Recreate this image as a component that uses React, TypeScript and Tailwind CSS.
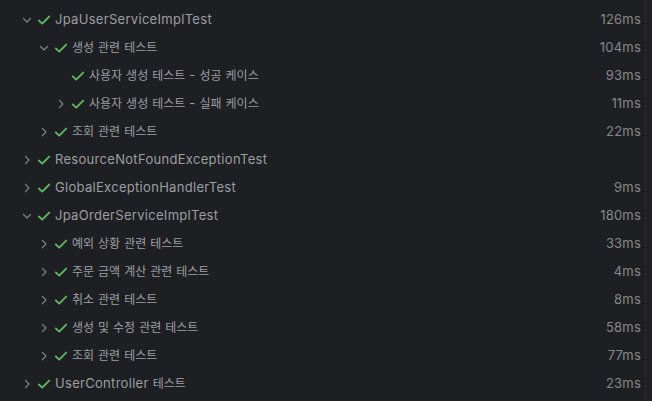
import React from "react";

type Row = {
  level: number;
  name: string;
  time?: string;
  open?: boolean;
  leaf?: boolean;
};

const rows: Row[] = [
  { level: 0, name: "JpaUserServiceImplTest", time: "126ms", open: true },
  { level: 1, name: "생성 관련 테스트", time: "104ms", open: true },
  { level: 2, name: "사용자 생성 테스트 - 성공 케이스", time: "93ms", leaf: true },
  { level: 2, name: "사용자 생성 테스트 - 실패 케이스", time: "11ms" },
  { level: 1, name: "조회 관련 테스트", time: "22ms" },
  { level: 0, name: "ResourceNotFoundExceptionTest" },
  { level: 0, name: "GlobalExceptionHandlerTest", time: "9ms" },
  { level: 0, name: "JpaOrderServiceImplTest", time: "180ms", open: true },
  { level: 1, name: "예외 상황 관련 테스트", time: "33ms" },
  { level: 1, name: "주문 금액 계산 관련 테스트", time: "4ms" },
  { level: 1, name: "취소 관련 테스트", time: "8ms" },
  { level: 1, name: "생성 및 수정 관련 테스트", time: "58ms" },
  { level: 1, name: "조회 관련 테스트", time: "77ms" },
  { level: 0, name: "UserController 테스트", time: "23ms" },
];

const indent = ["pl-[19px]", "pl-[36px]", "pl-[53px]"];

// Hangul runs render a touch smaller than the Latin text, like the IDE does
function Label({ text }: { text: string }) {
  const parts = text.split(/([\uac00-\ud7a3]+)/);
  return (
    <>
      {parts.map((p, i) =>
        /[\uac00-\ud7a3]/.test(p) ? (
          <span key={i} className="text-[12px] tracking-normal">{p}</span>
        ) : (
          <span key={i}>{p}</span>
        )
      )}
    </>
  );
}

function Chevron({ open }: { open?: boolean }) {
  return (
    <svg width="16" height="16" viewBox="0 0 16 16" fill="none">
      {open ? (
        <path d="M4.5 6.5 8 10l3.5-3.5" stroke="#7f8186" strokeWidth="1.2" strokeLinecap="round" strokeLinejoin="round" />
      ) : (
        <path d="M6.5 4.5 10 8l-3.5 3.5" stroke="#7f8186" strokeWidth="1.2" strokeLinecap="round" strokeLinejoin="round" />
      )}
    </svg>
  );
}

function Check() {
  return (
    <svg width="16" height="16" viewBox="0 0 16 16" fill="none">
      <path d="M2.8 8.4 6.2 11.6 13.2 4.6" stroke="#5fb865" strokeWidth="1.9" strokeLinecap="round" strokeLinejoin="round" />
    </svg>
  );
}

export default function App() {
  return (
    <div
      className="w-[652px] h-[401px] bg-[#1e1f22] flex overflow-hidden"
      style={{ fontFamily: "Inter, 'Noto Sans CJK KR', sans-serif" }}
    >
      <div className="flex-1 pt-[6px] pr-[4px]">
        {rows.map((r, i) => (
          <div key={i} className={`h-[28px] flex items-center ${indent[r.level]}`}>
            <div className="w-[16px] h-[16px] flex items-center justify-center">
              {!r.leaf && <Chevron open={r.open} />}
            </div>
            <div className="w-[16px] h-[16px] ml-[1px] flex items-center justify-center">
              <Check />
            </div>
            <span className="ml-[3px] text-[13px] text-[#9c9ea3] tracking-[0.3px]">
              <Label text={r.name} />
            </span>
            <span className="ml-auto text-[13px] text-[#85878c] tracking-[0.2px]">{r.time}</span>
          </div>
        ))}
      </div>
      <div className="w-[7px] border-l border-[#2b2d30] bg-[#1f2023]" />
    </div>
  );
}
